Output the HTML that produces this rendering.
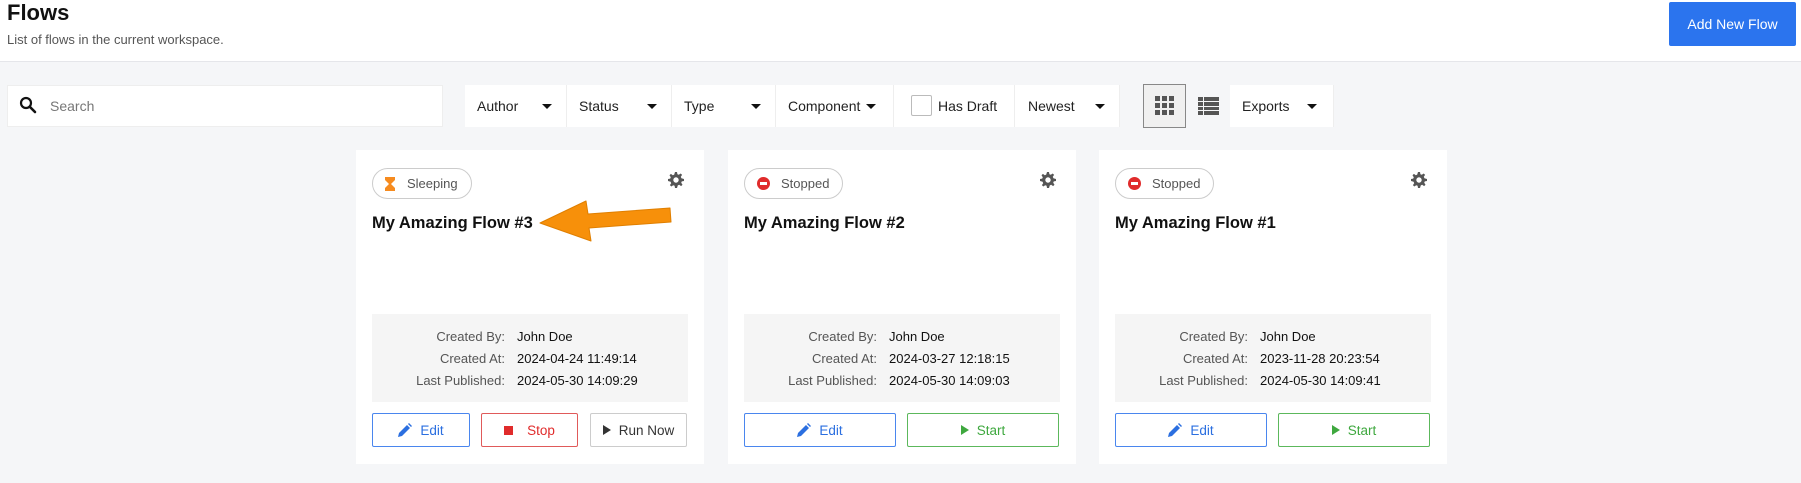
<!DOCTYPE html>
<html><head><meta charset="utf-8"><style>
*{box-sizing:border-box;margin:0;padding:0}
body{width:1801px;height:483px;background:#f5f6f8;font-family:"Liberation Sans",sans-serif;position:relative;overflow:hidden;color:#222}
.abs{position:absolute}
.hdr{left:0;top:0;width:1801px;height:62px;background:#fff;border-bottom:1px solid #e5e6ea}
.white{background:#fff}
.fl{position:absolute;top:85px;height:42px;background:#fff;display:flex;align-items:center;font-size:14px;color:#222;border-right:1px solid #eee}
.caret{position:absolute;right:14px;top:19px;width:0;height:0;border-left:5px solid transparent;border-right:5px solid transparent;border-top:5px solid #111}
.card{position:absolute;top:150px;width:348px;height:314px;background:#fff}
.badge{position:absolute;left:16px;top:18px;height:31px;border:1px solid #ccc;border-radius:16px;font-size:13px;color:#555;display:flex;align-items:center;padding:0 13px 0 12px}
.title{position:absolute;left:16px;top:64px;font-size:16.5px;font-weight:bold;color:#111}
.info{position:absolute;left:16px;top:164px;width:316px;height:88px;background:#f5f5f5;font-size:13px}
.row{position:absolute;left:0;width:316px;height:18px}
.lab{position:absolute;right:183px;color:#555;text-align:right}
.val{position:absolute;left:145px;color:#111}
.btn{position:absolute;top:263px;height:34px;border:1px solid;border-radius:2px;display:flex;align-items:center;justify-content:center;font-size:13.5px;gap:8px;background:#fff}
.gear{position:absolute;top:22px;right:20px}
</style></head><body>
<div class="abs hdr"></div>
<div class="abs" style="left:7px;top:0px;font-size:22px;font-weight:bold;color:#111">Flows</div>
<div class="abs" style="left:7px;top:32px;font-size:13px;color:#555">List of flows in the current workspace.</div>
<div class="abs" style="left:1669px;top:2px;width:127px;height:44px;background:#2b74ee;border-radius:2px;color:#fff;font-size:14px;display:flex;align-items:center;justify-content:center">Add New Flow</div>

<div class="abs white" style="left:7px;top:85px;width:436px;height:42px;border:1px solid #eee"></div>
<svg class="abs" style="left:19px;top:96px" width="18" height="18" viewBox="0 0 18 18"><circle cx="7" cy="7" r="5" fill="none" stroke="#111" stroke-width="2.2"/><path d="M11 11l5 5" stroke="#111" stroke-width="2.6" stroke-linecap="round"/></svg>
<div class="abs" style="left:50px;top:98px;font-size:14px;color:#777">Search</div>

<div class="fl" style="left:465px;width:102px;padding-left:12px">Author<span class="caret"></span></div>
<div class="fl" style="left:567px;width:105px;padding-left:12px">Status<span class="caret"></span></div>
<div class="fl" style="left:672px;width:104px;padding-left:12px">Type<span class="caret"></span></div>
<div class="fl" style="left:776px;width:118px;padding-left:12px">Component<span class="caret" style="right:17px"></span></div>
<div class="fl" style="left:894px;width:121px;padding-left:44px"><span style="position:absolute;left:17px;top:10px;width:21px;height:21px;border:1px solid #bbb;border-radius:2px"></span>Has Draft</div>
<div class="fl" style="left:1015px;width:105px;padding-left:13px">Newest<span class="caret"></span></div>

<div class="abs" style="left:1143px;top:84px;width:43px;height:44px;border:1px solid #888;background:#f0f0f0"></div>
<svg class="abs" style="left:1155px;top:96px" width="19" height="19" viewBox="0 0 19 19" fill="#555"><rect x="0" y="0" width="5" height="5"/><rect x="7" y="0" width="5" height="5"/><rect x="14" y="0" width="5" height="5"/><rect x="0" y="7" width="5" height="5"/><rect x="7" y="7" width="5" height="5"/><rect x="14" y="7" width="5" height="5"/><rect x="0" y="14" width="5" height="5"/><rect x="7" y="14" width="5" height="5"/><rect x="14" y="14" width="5" height="5"/></svg>
<svg class="abs" style="left:1198px;top:97px" width="21" height="18" viewBox="0 0 21 18" fill="#555"><rect x="0" y="0" width="5" height="4"/><rect x="6" y="0" width="15" height="4"/><rect x="0" y="5" width="5" height="4"/><rect x="6" y="5" width="15" height="4"/><rect x="0" y="10" width="5" height="3"/><rect x="6" y="10" width="15" height="3"/><rect x="0" y="14" width="5" height="4"/><rect x="6" y="14" width="15" height="4"/></svg>
<div class="fl" style="left:1230px;width:104px;padding-left:12px">Exports<span class="caret" style="right:16px"></span></div>

<!-- card 1 -->
<div class="card" style="left:356px">
 <div class="badge"><svg width="10" height="14" viewBox="0 0 10 14" style="margin-right:12px"><path d="M0 0h10v3L6 7l4 4v3H0v-3l4-4L0 3z" fill="#f68b1f"/></svg>Sleeping</div>
 <svg class="gear" width="16" height="16" viewBox="0 0 16 16"><path fill="#555" d="M7 0h2l.4 2.2 1.4.6 1.9-1.3 1.4 1.4-1.3 1.9.6 1.4L16 7v2l-2.2.4-.6 1.4 1.3 1.9-1.4 1.4-1.9-1.3-1.4.6L9 16H7l-.4-2.2-1.4-.6-1.9 1.3-1.4-1.4 1.3-1.9-.6-1.4L0 9V7l2.2-.4.6-1.4-1.3-1.9 1.4-1.4 1.9 1.3 1.4-.6zM8 5.3A2.7 2.7 0 1 0 8 10.7 2.7 2.7 0 1 0 8 5.3z"/></svg>
 <div class="title">My Amazing Flow #3</div>
 <div class="info">
  <div class="row" style="top:15px"><span class="lab">Created By:</span><span class="val">John Doe</span></div>
  <div class="row" style="top:37px"><span class="lab">Created At:</span><span class="val">2024-04-24 11:49:14</span></div>
  <div class="row" style="top:59px"><span class="lab">Last Published:</span><span class="val">2024-05-30 14:09:29</span></div>
 </div>
 <div class="btn" style="left:16px;width:98px;border-color:#4a86ee;color:#2b6fe0"><svg width="14" height="14" viewBox="0 0 14 14"><path d="M0 14l1-4 8-8 3 3-8 8zM10 1l1-1 3 3-1 1z" fill="#2b6fe0"/></svg>Edit</div>
 <div class="btn" style="left:125px;width:97px;border-color:#e05a5a;color:#e02b2b"><span style="width:9px;height:9px;background:#e02b2b;margin-right:6px"></span>Stop</div>
 <div class="btn" style="left:234px;width:97px;border-color:#ccc;color:#333"><span style="width:0;height:0;border-top:5px solid transparent;border-bottom:5px solid transparent;border-left:8px solid #333"></span>Run Now</div>
</div>

<!-- card 2 -->
<div class="card" style="left:728px">
 <div class="badge"><span style="width:13px;height:13px;border-radius:50%;background:#e02b2b;position:relative;margin-right:11px"><span style="position:absolute;left:3px;top:5px;width:7px;height:3px;background:#fff"></span></span>Stopped</div>
 <svg class="gear" width="16" height="16" viewBox="0 0 16 16"><path fill="#555" d="M7 0h2l.4 2.2 1.4.6 1.9-1.3 1.4 1.4-1.3 1.9.6 1.4L16 7v2l-2.2.4-.6 1.4 1.3 1.9-1.4 1.4-1.9-1.3-1.4.6L9 16H7l-.4-2.2-1.4-.6-1.9 1.3-1.4-1.4 1.3-1.9-.6-1.4L0 9V7l2.2-.4.6-1.4-1.3-1.9 1.4-1.4 1.9 1.3 1.4-.6zM8 5.3A2.7 2.7 0 1 0 8 10.7 2.7 2.7 0 1 0 8 5.3z"/></svg>
 <div class="title">My Amazing Flow #2</div>
 <div class="info">
  <div class="row" style="top:15px"><span class="lab">Created By:</span><span class="val">John Doe</span></div>
  <div class="row" style="top:37px"><span class="lab">Created At:</span><span class="val">2024-03-27 12:18:15</span></div>
  <div class="row" style="top:59px"><span class="lab">Last Published:</span><span class="val">2024-05-30 14:09:03</span></div>
 </div>
 <div class="btn" style="left:16px;width:152px;border-color:#4a86ee;color:#2b6fe0"><svg width="14" height="14" viewBox="0 0 14 14"><path d="M0 14l1-4 8-8 3 3-8 8zM10 1l1-1 3 3-1 1z" fill="#2b6fe0"/></svg>Edit</div>
 <div class="btn" style="left:179px;width:152px;border-color:#5cb85c;color:#3fa83f"><span style="width:0;height:0;border-top:5px solid transparent;border-bottom:5px solid transparent;border-left:8px solid #3fa83f"></span>Start</div>
</div>

<!-- card 3 -->
<div class="card" style="left:1099px">
 <div class="badge"><span style="width:13px;height:13px;border-radius:50%;background:#e02b2b;position:relative;margin-right:11px"><span style="position:absolute;left:3px;top:5px;width:7px;height:3px;background:#fff"></span></span>Stopped</div>
 <svg class="gear" width="16" height="16" viewBox="0 0 16 16"><path fill="#555" d="M7 0h2l.4 2.2 1.4.6 1.9-1.3 1.4 1.4-1.3 1.9.6 1.4L16 7v2l-2.2.4-.6 1.4 1.3 1.9-1.4 1.4-1.9-1.3-1.4.6L9 16H7l-.4-2.2-1.4-.6-1.9 1.3-1.4-1.4 1.3-1.9-.6-1.4L0 9V7l2.2-.4.6-1.4-1.3-1.9 1.4-1.4 1.9 1.3 1.4-.6zM8 5.3A2.7 2.7 0 1 0 8 10.7 2.7 2.7 0 1 0 8 5.3z"/></svg>
 <div class="title">My Amazing Flow #1</div>
 <div class="info">
  <div class="row" style="top:15px"><span class="lab">Created By:</span><span class="val">John Doe</span></div>
  <div class="row" style="top:37px"><span class="lab">Created At:</span><span class="val">2023-11-28 20:23:54</span></div>
  <div class="row" style="top:59px"><span class="lab">Last Published:</span><span class="val">2024-05-30 14:09:41</span></div>
 </div>
 <div class="btn" style="left:16px;width:152px;border-color:#4a86ee;color:#2b6fe0"><svg width="14" height="14" viewBox="0 0 14 14"><path d="M0 14l1-4 8-8 3 3-8 8zM10 1l1-1 3 3-1 1z" fill="#2b6fe0"/></svg>Edit</div>
 <div class="btn" style="left:179px;width:152px;border-color:#5cb85c;color:#3fa83f"><span style="width:0;height:0;border-top:5px solid transparent;border-bottom:5px solid transparent;border-left:8px solid #3fa83f"></span>Start</div>
</div>

<svg class="abs" style="left:0;top:0" width="1801" height="483"><path d="M670 208L588 214L586 201L540 223L591 241L589 228L671 222Z" fill="#f7900a" stroke="#e07f00" stroke-width="1" stroke-linejoin="round"/></svg>
</body></html>
